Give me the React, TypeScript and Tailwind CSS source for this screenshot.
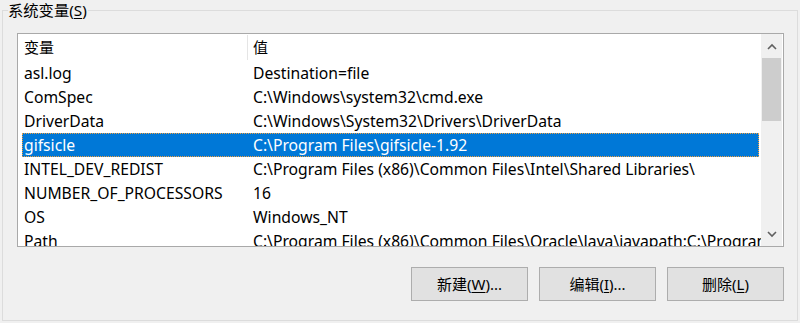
import React from "react";

const rows: [string, string][] = [
  ["asl.log", "Destination=file"],
  ["ComSpec", "C:\\Windows\\system32\\cmd.exe"],
  ["DriverData", "C:\\Windows\\System32\\Drivers\\DriverData"],
  ["gifsicle", "C:\\Program Files\\gifsicle-1.92"],
  ["INTEL_DEV_REDIST", "C:\\Program Files (x86)\\Common Files\\Intel\\Shared Libraries\\"],
  ["NUMBER_OF_PROCESSORS", "16"],
  ["OS", "Windows_NT"],
  ["Path", "C:\\Program Files (x86)\\Common Files\\Oracle\\Java\\javapath;C:\\Program Files\\Common"],
];

const font = { fontFamily: '"Noto Sans", "Noto Sans CJK SC", sans-serif' };

function Chevron({ up }: { up?: boolean }) {
  return (
    <svg width="10" height="7" viewBox="0 0 10 7">
      <path
        d={up ? "M1 6 L5 2 L9 6" : "M1 1 L5 5 L9 1"}
        fill="none"
        stroke="#606060"
        strokeWidth="1.6"
      />
    </svg>
  );
}

function Btn({ pre, u, post }: { pre: string; u: string; post: string }) {
  return (
    <button className="w-[117px] h-[34px] bg-[#e1e1e1] border border-[#adadad] text-[15px] text-black flex items-center justify-center leading-none">
      {pre}
      <span className="underline underline-offset-2">{u}</span>
      {post}
    </button>
  );
}

export default function App() {
  return (
    <div
      className="w-[800px] h-[323px] bg-[#f0f0f0] pt-[10px] pl-[2px] overflow-hidden text-black"
      style={font}
    >
      <div className="relative w-[796px] h-[311px] border border-[#dcdcdc]">
        <span className="absolute left-[5px] top-[-11px] bg-[#f0f0f0] text-[15.3px] leading-[20px] pr-[1px]">
          系统变量(<span className="underline underline-offset-2">S</span>)
        </span>
        <div className="ml-[14px] mt-[22px] w-[767px] h-[214px] border border-[#a9a9a9] bg-white flex">
          <div className="w-[743px] h-full overflow-hidden">
            <div className="h-[27px] flex items-center text-[15px]">
              <div className="w-[229px] pl-[6px]">变量</div>
              <div className="w-px h-[25px] bg-[#e5e5e5]" />
              <div className="pl-[5px]">值</div>
            </div>
            {rows.map(([n, v], i) => {
              const sel = i === 3;
              return (
                <div
                  key={n}
                  className={
                    "ml-[4px] mr-[2px] h-[24px] pt-[2px] flex items-center text-[15.7px] whitespace-nowrap " +
                    (sel
                      ? "bg-[#0078d7] text-white outline outline-1 outline-dotted outline-[#f0a040] -outline-offset-1"
                      : "")
                  }
                >
                  <div className="w-[231px] pl-[2px] shrink-0">{n}</div>
                  <div className="shrink-0">{v}</div>
                </div>
              );
            })}
          </div>
          <div className="w-[21px] h-full bg-[#f0f0f0] flex flex-col">
            <div className="h-[24px] flex items-center justify-center">
              <Chevron up />
            </div>
            <div className="mx-[1px] h-[63px] bg-[#cdcdcd]" />
            <div className="flex-1" />
            <div className="h-[24px] flex items-center justify-center">
              <Chevron />
            </div>
          </div>
        </div>
        <div className="ml-[14px] mt-[20px] w-[767px] flex justify-end gap-[11px]">
          <Btn pre="新建(" u="W" post=")..." />
          <Btn pre="编辑(" u="I" post=")..." />
          <Btn pre="删除(" u="L" post=")" />
        </div>
      </div>
    </div>
  );
}
